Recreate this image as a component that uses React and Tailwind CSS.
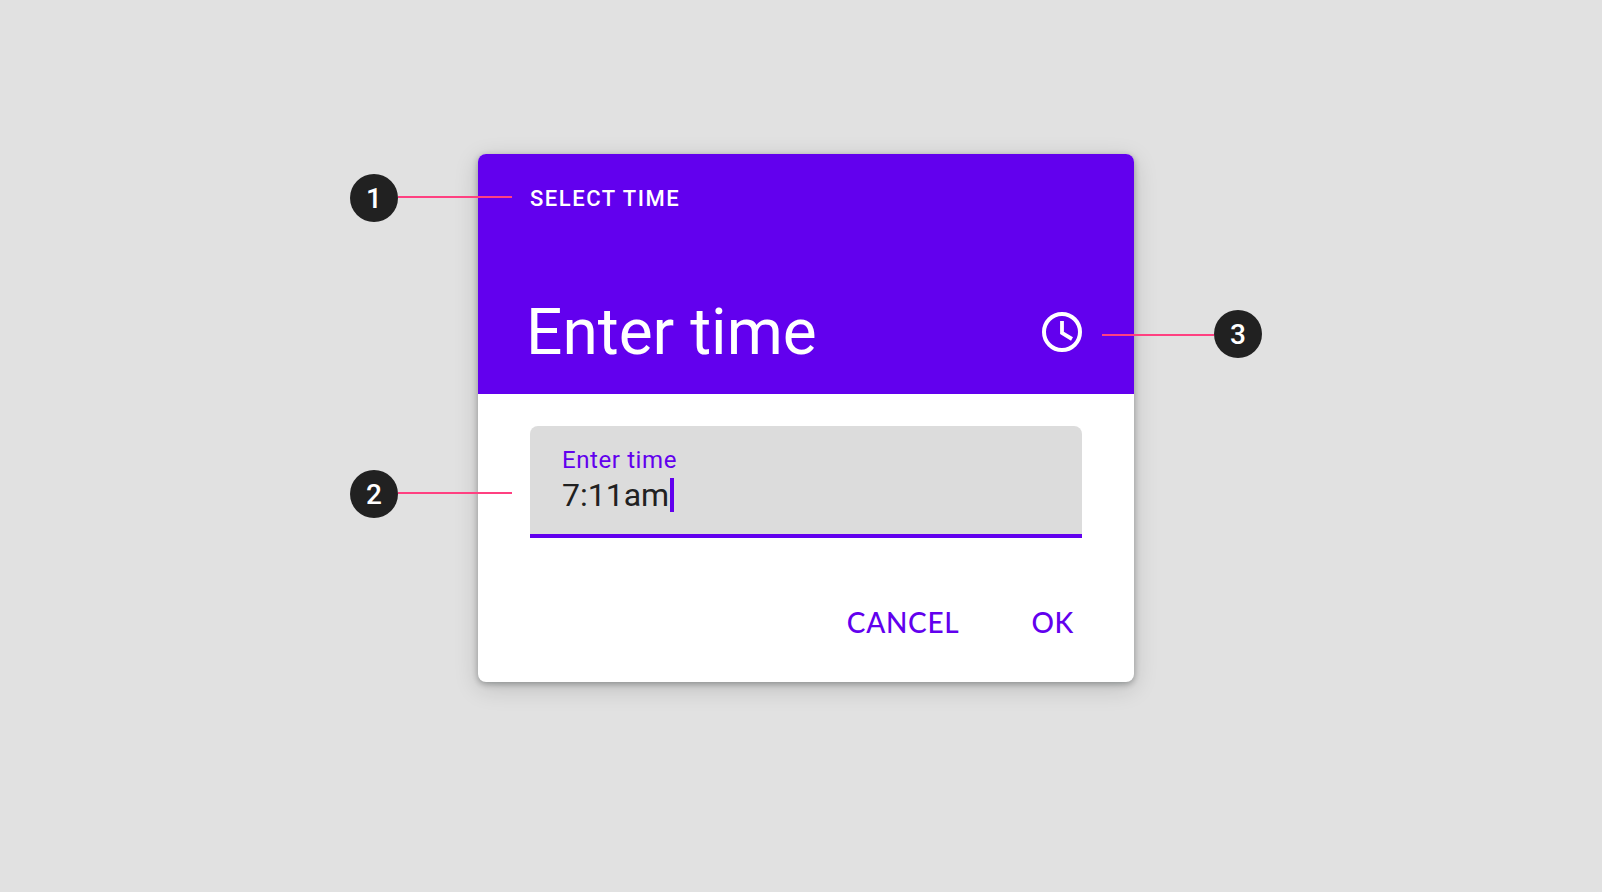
import { useState } from "react";

function Badge({ children }) {
  return (
    <span className="flex size-12 items-center justify-center rounded-full bg-[#212121] pt-0.5 text-[28px] leading-8 font-medium text-white">
      {children}
    </span>
  );
}

function ClockIcon() {
  return (
    <svg viewBox="0 0 40 40" className="size-10" fill="none" stroke="currentColor" strokeWidth="4" aria-hidden="true">
      <circle cx="20" cy="20" r="18" />
      <path d="M20 9v12l10 6" strokeWidth="3.8" />
    </svg>
  );
}

export default function App() {
  const [time, setTime] = useState("7:11am");

  return (
    <main className="flex min-h-screen items-start justify-center bg-[#e1e1e1] pt-[154px] pb-16 pl-[10px] font-['Roboto',sans-serif]">
      <div className="relative w-full max-w-[656px]">
        <form
          className="overflow-hidden rounded-lg bg-white shadow-[0_2px_6px_rgba(0,10,10,0.3),0_6px_24px_rgba(0,10,10,0.16)]"
          onSubmit={(e) => e.preventDefault()}
        >
          <header className="flex h-60 flex-col justify-between bg-[#6200ee] px-[52px] pt-7 pb-[23px] text-white">
            <p className="text-[22px] leading-[34px] font-medium tracking-[0.07em]">SELECT TIME</p>
            <div className="flex items-center justify-between">
              <h1 className="-ml-1 pt-0.5 text-[64px] leading-[76px]">Enter time</h1>
              <button type="button" aria-label="Switch to clock">
                <ClockIcon />
              </button>
            </div>
          </header>

          <div className="px-[52px] pt-8 pb-8">
            <div className="h-28 rounded-t-lg border-b-4 border-[#6200ee] bg-[#dcdcdc] px-8 pt-5">
              <label htmlFor="time" className="block text-2xl leading-7 tracking-wide text-[#6200ee]">
                Enter time
              </label>
              <div className="flex items-center pt-1">
                <input
                  id="time"
                  type="text"
                  value={time}
                  onChange={(e) => setTime(e.target.value)}
                  className="field-sizing-content h-[34px] pr-px text-[32px] leading-[34px] text-[#212121] caret-transparent outline-none"
                />
                <span className="h-[34px] w-1 bg-[#6200ee]" />
              </div>
            </div>

            <div className="flex justify-end gap-14 pt-14 font-['Lato',sans-serif] text-[28px] leading-14 font-medium tracking-wide text-[#6200ee]">
              <button type="button" className="px-2">CANCEL</button>
              <button type="submit" className="px-2">OK</button>
            </div>
          </div>
        </form>

        <div className="absolute top-5 right-full -mr-[34px] flex items-start">
          <Badge>1</Badge>
          <span className="mt-[22px] h-0.5 w-[114px] bg-[#ff4081]" />
        </div>
        <div className="absolute top-[316px] right-full -mr-[34px] flex items-start">
          <Badge>2</Badge>
          <span className="mt-[22px] h-0.5 w-[114px] bg-[#ff4081]" />
        </div>
        <div className="absolute top-[156px] left-full -ml-8 flex items-start">
          <span className="mt-6 h-0.5 w-28 bg-[#ff4081]" />
          <Badge>3</Badge>
        </div>
      </div>
    </main>
  );
}
